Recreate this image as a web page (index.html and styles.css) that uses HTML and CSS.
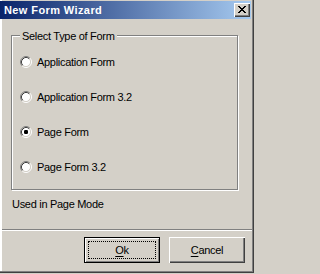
FILE: index.html
```html
<!DOCTYPE html>
<html>
<head>
<meta charset="utf-8">
<link rel="stylesheet" href="styles.css">
</head>
<body>
<div class="window">
  <div class="titlebar">
    <span class="title">New Form Wizard</span>
    <span class="close">
      <svg width="8" height="7" viewBox="0 0 8 7" shape-rendering="crispEdges">
        <path d="M0 0h2v1h-2zM6 0h2v1h-2zM1 1h2v1h-2zM5 1h2v1h-2zM2 2h4v1h-4zM3 3h2v1h-2zM2 4h4v1h-4zM1 5h2v1h-2zM5 5h2v1h-2zM0 6h2v1h-2zM6 6h2v1h-2z" fill="#000"/>
      </svg>
    </span>
  </div>
  <div class="content">
    <div class="group">
      <span class="legend">Select Type of Form</span>
      <div class="options">
        <label class="option"><svg class="radio" width="12" height="12" viewBox="0 0 12 12"><circle cx="6" cy="6" r="4.5" fill="#fff"/><path d="M2.11 9.89A5.5 5.5 0 0 1 9.89 2.11" stroke="#808080" fill="none"/><path d="M9.89 2.11A5.5 5.5 0 0 1 2.11 9.89" stroke="#fff" fill="none"/><path d="M2.82 9.18A4.5 4.5 0 0 1 9.18 2.82" stroke="#404040" fill="none"/><path d="M9.18 2.82A4.5 4.5 0 0 1 2.82 9.18" stroke="#d4d0c8" fill="none"/></svg><span>Application Form</span></label>
        <label class="option"><svg class="radio" width="12" height="12" viewBox="0 0 12 12"><circle cx="6" cy="6" r="4.5" fill="#fff"/><path d="M2.11 9.89A5.5 5.5 0 0 1 9.89 2.11" stroke="#808080" fill="none"/><path d="M9.89 2.11A5.5 5.5 0 0 1 2.11 9.89" stroke="#fff" fill="none"/><path d="M2.82 9.18A4.5 4.5 0 0 1 9.18 2.82" stroke="#404040" fill="none"/><path d="M9.18 2.82A4.5 4.5 0 0 1 2.82 9.18" stroke="#d4d0c8" fill="none"/></svg><span>Application Form 3.2</span></label>
        <label class="option"><svg class="radio" width="12" height="12" viewBox="0 0 12 12"><circle cx="6" cy="6" r="4.5" fill="#fff"/><path d="M2.11 9.89A5.5 5.5 0 0 1 9.89 2.11" stroke="#808080" fill="none"/><path d="M9.89 2.11A5.5 5.5 0 0 1 2.11 9.89" stroke="#fff" fill="none"/><path d="M2.82 9.18A4.5 4.5 0 0 1 9.18 2.82" stroke="#404040" fill="none"/><path d="M9.18 2.82A4.5 4.5 0 0 1 2.82 9.18" stroke="#d4d0c8" fill="none"/><rect x="4" y="4" width="4" height="4" rx="1.2" fill="#000"/></svg><span>Page Form</span></label>
        <label class="option"><svg class="radio" width="12" height="12" viewBox="0 0 12 12"><circle cx="6" cy="6" r="4.5" fill="#fff"/><path d="M2.11 9.89A5.5 5.5 0 0 1 9.89 2.11" stroke="#808080" fill="none"/><path d="M9.89 2.11A5.5 5.5 0 0 1 2.11 9.89" stroke="#fff" fill="none"/><path d="M2.82 9.18A4.5 4.5 0 0 1 9.18 2.82" stroke="#404040" fill="none"/><path d="M9.18 2.82A4.5 4.5 0 0 1 2.82 9.18" stroke="#d4d0c8" fill="none"/></svg><span>Page Form 3.2</span></label>
      </div>
    </div>
    <div class="note">Used in Page Mode</div>
    <div class="separator"></div>
    <div class="buttons">
      <button class="btn default"><span class="focus"><u>O</u>k</span></button>
      <button class="btn"><span class="focus-none"><u>C</u>ancel</span></button>
    </div>
  </div>
</div>
</body>
</html>
```
FILE: styles.css
```css
html, body {
  margin: 0;
  padding: 0;
  background: #d4d0c8;
}
body {
  font-family: "Liberation Sans", Arial, sans-serif;
  font-size: 11px;
  color: #000;
}
.window {
  width: 254px;
  height: 273px;
  box-sizing: border-box;
  background: #d4d0c8;
  padding-top: 1px;
  box-shadow: inset -1px -1px 0 #404040, inset -2px -2px 0 #808080, inset 2px 0 0 #fff, inset 1px 0 0 #d4d0c8;
  display: flex;
  flex-direction: column;
}
.titlebar {
  height: 18px;
  margin-right: 3px;
  background: linear-gradient(to right, #0a246a, #a6caf0);
  display: flex;
  align-items: center;
  justify-content: space-between;
  padding: 0 1px 0 4px;
}
.title {
  color: #fff;
  font-weight: bold;
  font-size: 11px;
  letter-spacing: 0.4px;
  line-height: 13px;
  margin-top: 1px;
}
.close {
  width: 16px;
  height: 14px;
  box-sizing: border-box;
  background: #d4d0c8;
  box-shadow: inset 1px 1px 0 #fff, inset -1px -1px 0 #404040, inset -2px -2px 0 #808080;
  display: flex;
  align-items: center;
  justify-content: center;
  padding: 0 1px 1px 0;
}
.close svg { display: block; }
.content {
  padding: 0 2px;
  flex: 1;
  display: flex;
  flex-direction: column;
  letter-spacing: -0.3px;
  line-height: 13px;
}
.group {
  position: relative;
  margin: 16px 0 0 9px;
  width: 227px;
  height: 155px;
  box-sizing: border-box;
  border: 1px solid #808080;
  box-shadow: inset 1px 1px 0 #fff, 1px 1px 0 #fff;
}
.legend {
  position: absolute;
  top: -6px;
  left: 8px;
  padding: 0 2px;
  background: #d4d0c8;
  line-height: 13px;
}
.options {
  display: flex;
  flex-direction: column;
  gap: 23px;
  padding: 20px 0 0 8px;
}
.option {
  display: flex;
  align-items: center;
  height: 12px;
  gap: 5px;
}
.radio {
  display: block;
  flex: none;
}
.note {
  margin: 8px 0 0 10px;
}
.separator {
  margin-top: 18px;
  height: 1px;
  border-top: 1px solid #808080;
  border-bottom: 1px solid #fff;
  height: 0;
}
.buttons {
  display: flex;
  justify-content: flex-end;
  gap: 9px;
  margin-top: 6px;
  padding-right: 7px;
}
.btn {
  width: 76px;
  height: 26px;
  box-sizing: border-box;
  margin: 0;
  padding: 0;
  font: inherit;
  letter-spacing: -0.3px;
  color: #000;
  background: #d4d0c8;
  border: none;
  border-radius: 0;
  box-shadow: inset 1px 1px 0 #fff, inset -1px -1px 0 #404040, inset -2px -2px 0 #808080;
  display: flex;
  align-items: center;
  justify-content: center;
}
.btn.default {
  border: 1px solid #000;
  box-shadow: inset 1px 1px 0 #fff, inset -1px -1px 0 #808080;
  position: relative;
}
.focus, .focus-none {
  line-height: 13px;
}
.btn.default::after {
  content: "";
  position: absolute;
  left: 3px;
  top: 3px;
  right: 3px;
  bottom: 3px;
  border: 1px dotted #000;
}
u {
  text-decoration: underline;
  text-underline-offset: 2px;
}
```
